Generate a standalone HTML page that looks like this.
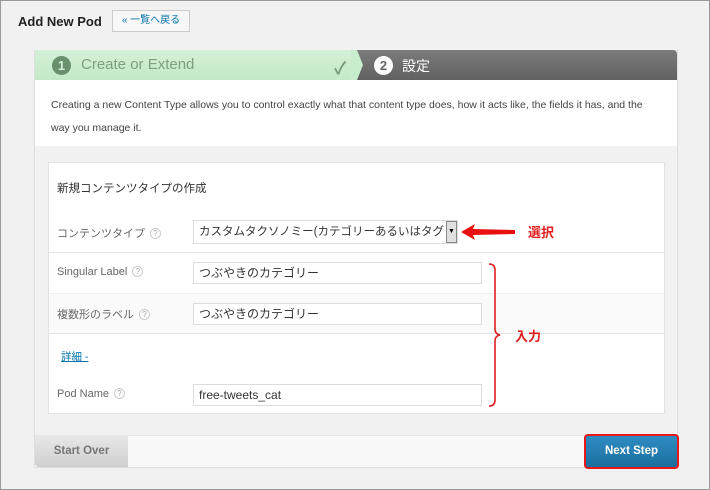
<!DOCTYPE html>
<html><head><meta charset="utf-8"><style>
*{box-sizing:border-box;margin:0;padding:0}
body{width:710px;height:490px;background:#f1f1f1;font-family:"Liberation Sans","Noto Sans CJK JP",sans-serif;position:relative;overflow:hidden;border:1px solid #999;}
.abs{position:absolute}
h1{position:absolute;left:17px;top:13px;font-size:13px;font-weight:bold;color:#222}
.back{left:111px;top:9px;width:78px;height:22px;border:1px solid #ccc;background:#f7f7f7;font-size:10px;color:#0073aa;text-align:center;line-height:20px}
.box{left:33px;top:49px;width:644px;height:418px;border:1px solid #ddd;background:#f1f1f1}
.green{left:34px;top:49px;width:322px;height:30px;background:linear-gradient(#d4f1d8,#c3e9c7);}
.dark{left:356px;top:49px;width:320px;height:30px;background:linear-gradient(#7b7b7b,#616161);border-radius:0 4px 0 0}
.desc{left:34px;top:79px;width:642px;height:66px;background:#fff;font-size:10.5px;color:#444;line-height:23px;padding:14px 16px}
.panel{left:47px;top:161px;width:617px;height:252px;background:#fff;border:1px solid #e2e2e2}
.lbl{font-size:11px;color:#666}
.q{display:inline-block;width:11px;height:11px;border-radius:50%;border:1px solid #ccc;font-size:8px;color:#aaa;text-align:center;line-height:9px;vertical-align:1px;margin-left:5px}
.inp{border:1px solid #ddd;background:#fff;font-size:12px;color:#333;height:22px;line-height:20px;padding-left:5px;width:289px;left:192px}
.red{color:#e02020;font-size:13px;font-weight:bold}
</style></head><body>
<h1>Add New Pod</h1>
<div class="abs back">« 一覧へ戻る</div>
<div class="abs box"></div>
<div class="abs green"></div>
<div class="abs dark"></div>
<svg class="abs" style="left:350px;top:49px" width="16" height="30"><polygon points="0,0 6,0 12,15 6,30 0,30" fill="#c8ecce"/></svg>
<div class="abs" style="left:51px;top:55px;width:19px;height:19px;border-radius:50%;background:#6a8f6d;color:#d4f1d8;font-weight:bold;font-size:13px;text-align:center;line-height:19px">1</div>
<div class="abs" style="left:80px;top:55px;font-size:15px;color:#7f9e82">Create or Extend</div>
<div class="abs" style="left:333px;top:53px;font-size:17px;font-weight:bold;color:#789a7b">✓</div>
<div class="abs" style="left:373px;top:55px;width:19px;height:19px;border-radius:50%;background:#fff;color:#666;font-weight:bold;font-size:13px;text-align:center;line-height:19px">2</div>
<div class="abs" style="left:401px;top:55px;font-size:14px;color:#fff">設定</div>
<div class="abs desc">Creating a new Content Type allows you to control exactly what that content type does, how it acts like, the fields it has, and the way you manage it.</div>
<div class="abs panel"></div>
<div class="abs" style="left:56px;top:179px;font-size:11.5px;color:#333">新規コンテンツタイプの作成</div>
<div class="abs lbl" style="left:56px;top:224px">コンテンツタイプ<span class="q">?</span></div>
<div class="abs inp" style="top:219px;width:265px;height:24px;font-size:11.5px;line-height:22px;padding-left:5px;overflow:hidden;white-space:nowrap">カスタムタクソノミー(カテゴリーあるいはタグ</div>
<div class="abs" style="left:445px;top:220px;width:11px;height:22px;background:#e0e0e0;border:1px solid #888;font-size:7px;text-align:center;line-height:20px">▼</div>
<svg class="abs" style="left:460px;top:222px" width="55" height="18"><polygon points="0,9 14,1 12,6 54,7 54,11 12,12 14,17" fill="#e81010"/></svg>
<div class="abs red" style="left:527px;top:221px">選択</div>
<div class="abs" style="left:48px;top:251px;width:615px;height:1px;background:#e5e5e5"></div>
<div class="abs" style="left:48px;top:292px;width:615px;height:41px;background:#fafafa;border-top:1px solid #eee;border-bottom:1px solid #e5e5e5"></div>
<div class="abs lbl" style="left:56px;top:265px">Singular Label<span class="q">?</span></div>
<div class="abs inp" style="top:261px">つぶやきのカテゴリー</div>
<div class="abs lbl" style="left:56px;top:305px">複数形のラベル<span class="q">?</span></div>
<div class="abs inp" style="top:302px">つぶやきのカテゴリー</div>
<div class="abs" style="left:60px;top:348px;font-size:10.5px;color:#0073aa;text-decoration:underline">詳細 -</div>
<div class="abs lbl" style="left:56px;top:387px">Pod Name<span class="q">?</span></div>
<div class="abs inp" style="top:383px">free-tweets_cat</div>
<svg class="abs" style="left:486px;top:262px" width="16" height="145"><path d="M2,1 Q8,1 8,7 L8,66 Q8,71 13,72 Q8,73 8,78 L8,137 Q8,143 2,143" fill="none" stroke="#e02020" stroke-width="1.6"/></svg>
<div class="abs red" style="left:514px;top:325px">入力</div>
<div class="abs" style="left:34px;top:434px;width:642px;height:32px;background:#f8f8f8;border-top:1px solid #e5e5e5"></div>
<div class="abs" style="left:34px;top:434px;width:93px;height:32px;background:linear-gradient(#e8e8e8,#cfcfcf);color:#777;font-weight:bold;font-size:11.5px;text-align:center;line-height:32px;border-radius:0 0 0 4px">Start Over</div>
<div class="abs" style="left:583px;top:433px;width:95px;height:35px;border:2px solid #e81818;border-radius:4px;background:linear-gradient(#2e8cc2,#1c6e9e);color:#fff;font-weight:bold;font-size:11.5px;text-align:center;line-height:31px">Next Step</div>
</body></html>
